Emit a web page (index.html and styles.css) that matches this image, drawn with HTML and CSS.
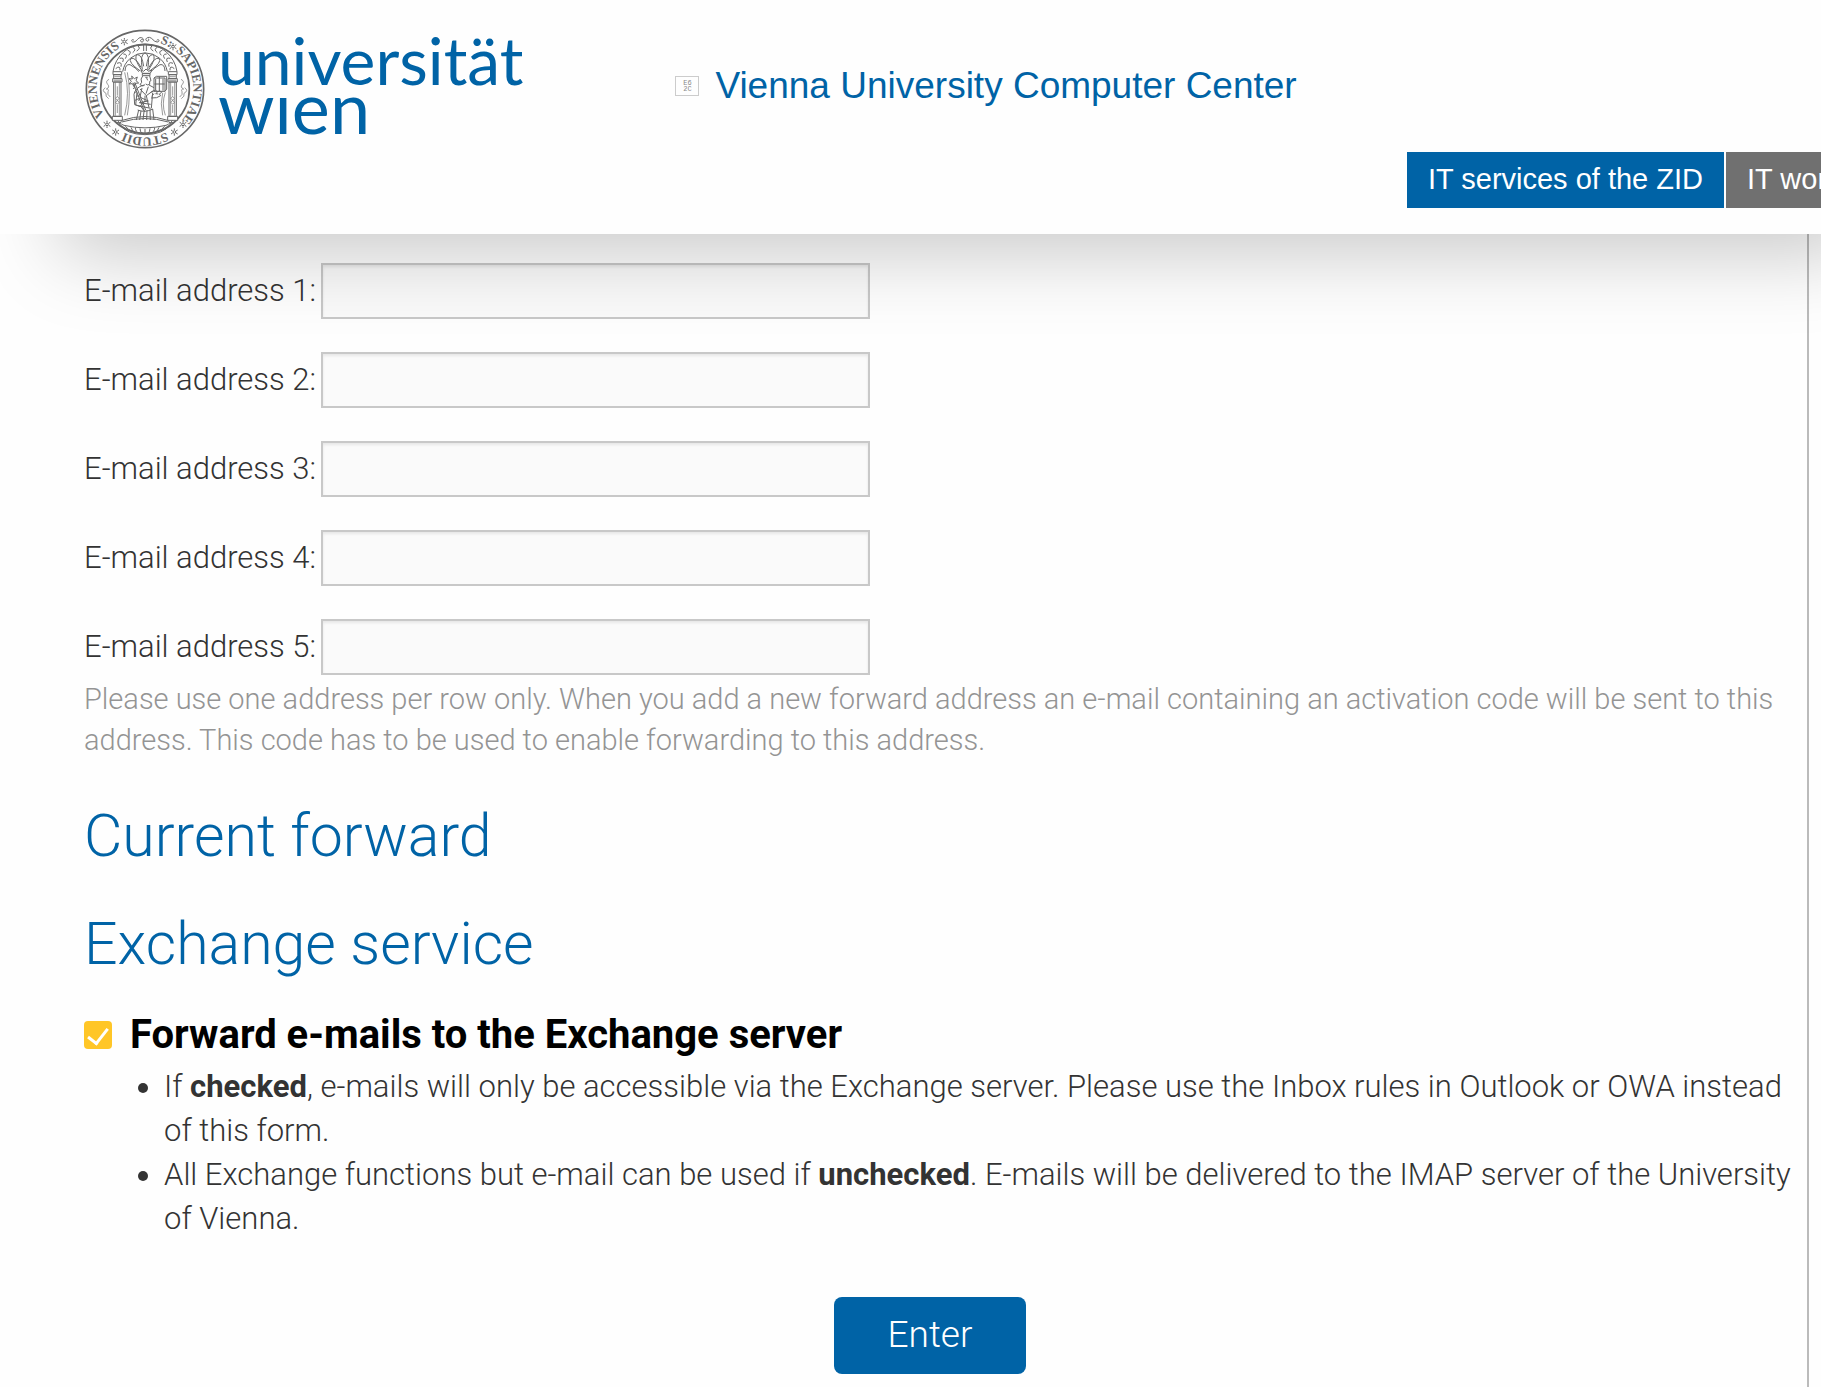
FILE: index.html
```html
<!DOCTYPE html>
<html lang="en">
<head>
  <meta charset="UTF-8">
  <meta name="viewport" content="width=device-width, initial-scale=1.0">
  <title>E-mail forward - Vienna University Computer Center</title>
  <link rel="stylesheet" href="styles.css">
</head>
<body>
  <header class="header">
    <div class="header-top">
      <a class="logo" href="#" aria-label="Universität Wien">
        <svg class="seal" viewBox="0 0 360 360" fill="none" stroke="#666" stroke-width="3">
          <defs>
            <path id="ring" d="M180 35a145 145 0 0 1 0 290a145 145 0 0 1 0-290"/>
            <g id="star" stroke-width="3">
              <circle r="4"/>
              <path d="M0-6v-5M0 6v5M5-3l5-3M-5 3l-5 3M5 3l5 3M-5-3l-5-3"/>
            </g>
            <g id="pillar" fill="#fff">
              <path d="M84 128h26v9H84zM86 137h22v12H86zM83 149h28v10H83zM86 159h22v103H86zM82 262h30v12H82z"/>
              <path d="M88 143h18M86 154h22M91 160v100M103 160v100M97 172v28M97 228v24" stroke-width="2"/>
              <path d="M97 202l5 6-5 6-5-6zM97 214l5 6-5 6-5-6z" stroke-width="2"/>
            </g>
          </defs>
          <circle cx="180" cy="180" r="176" stroke-width="5"/>
          <circle cx="180" cy="180" r="133" stroke-width="5"/>
          <g class="seal-text">
            <text transform="rotate(237 180 180)"><textPath href="#ring">VIENNENSIS</textPath></text>
            <text transform="rotate(18 180 180)"><textPath href="#ring">S:</textPath></text>
            <text transform="rotate(39 180 180)"><textPath href="#ring">SAPIENTIAE</textPath></text>
            <text transform="rotate(154 180 180)"><textPath href="#ring">STUDII</textPath></text>
          </g>
          <use href="#star" x="118" y="38"/>
          <use href="#star" x="264" y="53"/>
          <use href="#star" x="66" y="286"/>
          <use href="#star" x="92" y="309"/>
          <use href="#star" x="268" y="309"/>
          <use href="#star" x="294" y="286"/>
          <path d="M147 34c-8-7-10 6-1 5 11-1 12-15 23-13 12 3 6 17-1 12-5-4 3-9 6-5M215 34c8-7 10 6 1 5-11-1-14-13-23-14-10 0-14 8-7 11 5 2 8-5 3-7"/>
          <!-- arch with garland -->
          <path d="M84 128a97 97 0 0 1 192 0M113 128a68 68 0 0 1 134 0"/>
          <path d="M92 119q14-12 13 5M96 103q16-7 12 10M104 88q16-4 9 11M115 75q15 0 6 14M128 64q14 3 3 15M143 55q13 6 0 16M158 50q11 8-3 16M268 119q-14-12-13 5M264 103q-16-7-12 10M256 88q-16-4-9 11M245 75q-15 0-6 14M232 64q-14 3-3 15M217 55q-13 6 0 16M202 50q-11 8 3 16M176 46v20M184 46v20"/>
          <!-- shell -->
          <path d="M172 122Q164 75 180 72Q196 75 188 122M170 124Q142 82 158 77Q171 78 176 112M190 124Q218 82 202 77Q189 78 184 112M166 126Q127 99 138 88Q151 84 168 115M194 126Q233 99 222 88Q209 84 192 115M120 126Q121 104 135 107Q152 116 162 128M240 126Q239 104 225 107Q208 116 198 128"/>
          <!-- curtains -->
          <path d="M119 130q17 61 0 129M127 130q12 61 0 129M241 190q-12 35 0 69M233 192q-8 31 0 67" stroke-width="2"/>
          <use href="#pillar"/>
          <use href="#pillar" x="166"/>
          <path d="M72 151q-12 6-4 15t-4 14q9 0 5 8t7 16M61 176q-13 9 2 17q-3 9 8 16M288 151q12 6 4 15t4 14q-9 0-5 8t-7 16M299 176q13 9-2 17q3 9-8 16" stroke-width="2"/>
          <!-- crowned figure with sceptre and book -->
          <path d="M172 133l-4-10 8 4 7-7 8 7 9-4-4 10zM172 134h23v6h-23z" fill="#fff"/>
          <path d="M173 141q-8 9-3 19l-5 7q10 8 15 0M194 141l4 14-4 2v9q-7 4-12-1M181 145h7M185 147l3 7"/>
          <path d="M176 168q-26 8-29 28l2 31 11 3M192 168l15 8M156 190l-4 38 16 5 12 16M165 180l19 20 22-16M180 200v16l-17 18M184 200l8 36M203 191l-4 47M150 214l20-9M170 207l20 9-27 5 34 5M159 230l38 8M171 177l-6 27M190 173l-7 21"/>
          <path d="M140 141l8 8 9-5-4 11 8 7-11 1-3 10-5-9-10 1 7-8-7-8 10 1z" fill="#fff"/>
          <path d="M149 160l33 83M144 161l34 85M151 175l-7 4M156 187l-8 4M161 199l-7 4M166 211l-7 3"/>
          <path d="M207 147h33v40h-33zM207 147l7-5h31v38l-5 7M212 150v34M223 143v43M234 149v36M208 165h31"/>
          <path d="M197 190l14-6 8 4 6-3 5 5-7 5 4 5-12 6-17 1M218 189l-6 5 8 1M207 194l-7 8"/>
          <path d="M161 243l-7 30M168 245l-4 28M177 248l-3 25M186 244l-1 29M195 241l1 32M203 240l4 33M158 243q20 9 46-3"/>
          <path d="M112 274q68-23 136 0M112 274q-14 9 5 15 63 15 126 0 19-6 5-15M110 279q70-21 140 0"/>
          <path d="M98 274l8 13q17 29 74 30 57-1 74-30l8-13M121 292q16 21 59 21t59-21M138 295q3 12 14 16M151 296q0 13 13 17M165 298q-1 12 9 16M180 300v15M195 298q1 12-9 16M209 296q0 13-13 17M222 295q-3 12-14 16M94 281h11M255 281h11"/>
        </svg>
        <span class="wordmark">universität<br><span class="wordmark-city">wıen</span></span>
      </a>
      <a class="site-title" href="#">
        <span class="missing-icon" aria-hidden="true">E6<br>2C</span>
        Vienna University Computer Center
      </a>
    </div>
    <nav class="tabs">
      <a class="tab active" href="#">IT services of the ZID</a>
      <a class="tab" href="#">IT wor</a>
    </nav>
  </header>

  <main class="content">
    <form class="forward-form">
      <div class="addresses">
        <div class="address-row">
          <label for="address1">E-mail address 1:</label>
          <input type="text" id="address1">
        </div>
        <div class="address-row">
          <label for="address2">E-mail address 2:</label>
          <input type="text" id="address2">
        </div>
        <div class="address-row">
          <label for="address3">E-mail address 3:</label>
          <input type="text" id="address3">
        </div>
        <div class="address-row">
          <label for="address4">E-mail address 4:</label>
          <input type="text" id="address4">
        </div>
        <div class="address-row">
          <label for="address5">E-mail address 5:</label>
          <input type="text" id="address5">
        </div>
      </div>
      <p class="help">Please use one address per row only. When you add a new forward address an e-mail containing an activation code will be sent to this address. This code has to be used to enable forwarding to this address.</p>

      <h2>Current forward</h2>
      <h2>Exchange service</h2>

      <div class="check-row">
        <input type="checkbox" id="exchange" checked>
        <label for="exchange">Forward e-mails to the Exchange server</label>
      </div>
      <ul class="notes">
        <li>If <strong>checked</strong>, e-mails will only be accessible via the Exchange server. Please use the Inbox rules in Outlook or OWA instead of this form.</li>
        <li>All Exchange functions but e-mail can be used if <strong>unchecked</strong>. E-mails will be delivered to the IMAP server of the University of Vienna.</li>
      </ul>

      <button class="submit" type="submit">Enter</button>
    </form>
  </main>
</body>
</html>
```
FILE: styles.css
```css
* {
  box-sizing: border-box;
}

body {
  margin: 0;
  min-height: 100vh;
  display: flex;
  flex-direction: column;
  overflow-x: hidden;
  background: #fefefe;
  color: #333;
  font-family: Roboto, "Liberation Sans", sans-serif;
  font-weight: 300;
  font-size: 31px;
  line-height: 44px;
}

a {
  color: #0063a6;
  text-decoration: none;
}

strong {
  font-weight: 700;
}

/* header */

.header {
  position: relative;
  z-index: 1;
  width: calc(100% + 100px);
  padding: 29px 0 26px 85px;
  background: #fefefe;
  box-shadow: 0 80px 80px -60px rgba(0, 0, 0, 0.21);
}

.header-top {
  display: flex;
  align-items: flex-start;
  gap: 152px;
}

.logo {
  display: flex;
  gap: 13px;
}

.seal {
  width: 120px;
  height: 120px;
}

.seal-text {
  fill: #666;
  stroke: none;
  font-family: "Liberation Serif", serif;
  font-weight: bold;
  font-size: 38px;
}

.wordmark {
  padding-top: 8px;
  font-family: Lato, sans-serif;
  font-weight: 400;
  font-size: 66px;
  line-height: 46px;
}

.wordmark-city {
  font-size: 72px;
}

.site-title {
  display: flex;
  align-items: center;
  gap: 16px;
  padding-top: 35px;
  font-family: "Liberation Sans", Arial, sans-serif;
  font-weight: 400;
  font-size: 37px;
}

.missing-icon {
  width: 24px;
  height: 20px;
  padding-top: 3px;
  border: 1px solid #ccc;
  color: #888;
  font-family: "Liberation Mono", monospace;
  font-size: 7px;
  line-height: 6px;
  text-align: center;
}

.tabs {
  display: flex;
  justify-content: flex-end;
  gap: 2px;
  margin-top: 3px;
}

.tab {
  width: 195px;
  padding: 5px 21px 7px;
  background: #707070;
  color: #fff;
  font-family: "Liberation Sans", Arial, sans-serif;
  font-weight: 400;
  font-size: 29px;
  white-space: nowrap;
}

.tab.active {
  width: auto;
  background: #0063a6;
}

/* content */

.content {
  flex: 1;
  margin-right: 12px;
  padding: 29px 31px 12px 84px;
  border-right: 2px solid #bbb;
}

.addresses {
  display: flex;
  flex-direction: column;
  gap: 33px;
}

.address-row {
  display: flex;
  align-items: center;
  gap: 5px;
}

.address-row input {
  width: 549px;
  height: 56px;
  padding: 8px;
  border: 2px solid #c8c8c8;
  background: #fafafa;
  box-shadow: inset 0 2px 3px rgba(0, 0, 0, 0.08);
  font: inherit;
  color: inherit;
}

.help {
  margin: 4px 0 0;
  color: #949494;
  font-size: 29px;
  line-height: 41px;
}

h2 {
  margin: 36px 0;
  color: #0063a6;
  font-weight: 300;
  font-size: 59px;
  line-height: 72px;
}

.help + h2 {
  margin-top: 39px;
}

h2 + h2 {
  margin-bottom: 27px;
}

.check-row {
  display: flex;
  align-items: center;
  gap: 18px;
  margin-bottom: 2px;
  color: #000;
  font-weight: 700;
  font-size: 40px;
  line-height: 56px;
}

.check-row input {
  appearance: none;
  width: 28px;
  height: 28px;
  margin: 0;
  border-radius: 4px;
  background: #ffc627;
}

/* tick mark */
.check-row input:checked::before {
  content: "";
  display: block;
  width: 9px;
  height: 17px;
  margin: 3px auto 0;
  border: solid #fff;
  border-width: 0 3px 3px 0;
  transform: rotate(38deg);
}

.notes {
  margin: 0 -20px 0 0;
  padding-left: 80px;
}

.submit {
  display: block;
  margin: 56px auto 0;
  padding: 16px 54px 17px;
  border: 0;
  border-radius: 8px;
  background: #0063a6;
  color: #fff;
  font: inherit;
  font-size: 37px;
}
```
